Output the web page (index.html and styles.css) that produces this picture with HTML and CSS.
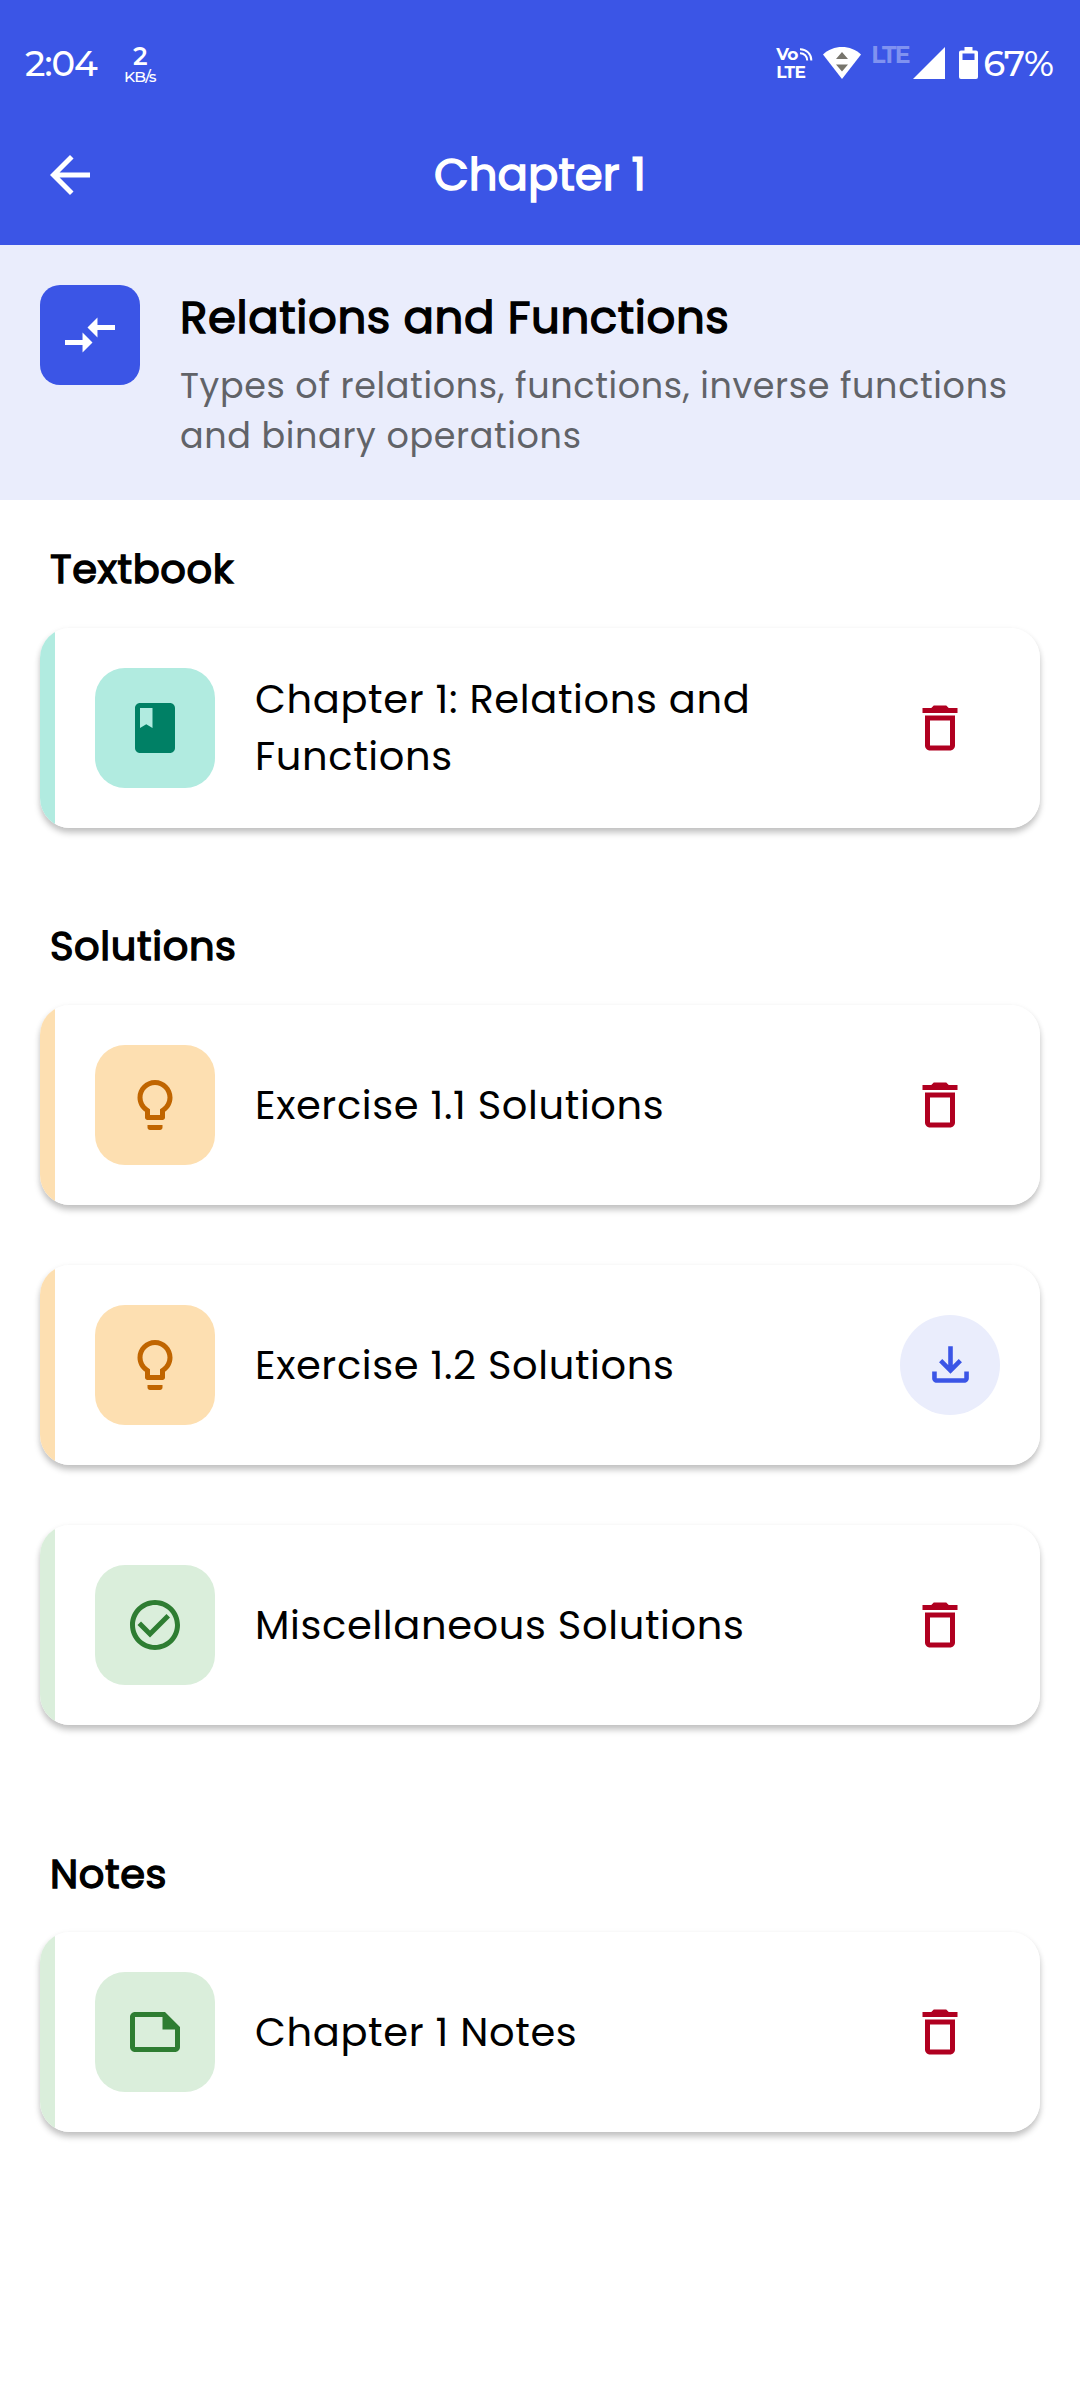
FILE: index.html
```html
<!DOCTYPE html>
<html lang="en">
<head>
<meta charset="utf-8">
<title>Chapter 1</title>
<link rel="stylesheet" href="styles.css">
</head>
<body>
<header class="top">
  <div class="status">
    <span class="clock">2:04</span>
    <span class="speed"><b>2</b><span>KB/s</span></span>
    <span class="spacer"></span>
    <span class="volte">
      <span class="vo">Vo<svg width="13" height="13" viewBox="0 0 13 13" fill="none" stroke="#fff" stroke-width="2"><path d="M0 1.2A11 11 0 0 1 11.3 12.5M0 5.2A7 7 0 0 1 7.2 12.5"/></svg></span>
      <span>LTE</span>
    </span>
    <svg class="wifi" width="38" height="32" viewBox="0 0 38 32"><path d="M0 7.5C10-2.5 28-2.5 38 7.5L19 32z" fill="#fff"/><path d="M19 5l6 7H13zM13 17.500h12l-6 7z" fill="#77756c"/></svg>
    <span class="lte">LTE</span>
    <svg class="signal" width="32" height="32" viewBox="0 0 32 32"><path d="M32 0v32H0z" fill="#fff"/></svg>
    <svg class="battery" width="19" height="32" viewBox="0 0 19 32"><path fill-rule="evenodd" fill="#fff" d="M5.500 0h8v3.500H17a2 2 0 0 1 2 2V30a2 2 0 0 1-2 2H2a2 2 0 0 1-2-2V5.500a2 2 0 0 1 2-2h3.500zM3.500 6.500V13h12V6.500z"/></svg>
    <span class="percent">67%</span>
  </div>
  <div class="bar">
    <svg width="60" height="60" viewBox="0 0 24 24" fill="#fff"><path d="M20 11H7.830l5.590-5.590L12 4l-8 8 8 8 1.410-1.410L7.830 13H20z"/></svg>
    <h1>Chapter 1</h1>
  </div>
</header>

<section class="intro">
  <div class="badge"><svg width="60" height="60" viewBox="0 0 24 24" fill="#fff"><path d="M9.010 14H2v2h7.010v3L13 15l-3.990-4zM14.990 13v-3H22V8h-7.010V5L11 9z"/></svg></div>
  <div>
    <h2>Relations and Functions</h2>
    <p>Types of relations, functions, inverse functions and binary operations</p>
  </div>
</section>

<svg width="0" height="0" class="defs">
  <symbol id="trash" viewBox="0 0 24 24"><path d="M6 19c0 1.100.9 2 2 2h8c1.100 0 2-.9 2-2V7H6zM8 9h8v10H8zM15.500 4l-1-1h-5l-1 1H5v2h14V4z"/></symbol>
  <symbol id="bulb" viewBox="0 0 24 24"><path d="M9 21c0 .55.45 1 1 1h4c.55 0 1-.45 1-1v-1H9zM12 2C8.140 2 5 5.140 5 9c0 2.380 1.190 4.470 3 5.740V17c0 .55.45 1 1 1h6c.55 0 1-.45 1-1v-2.260c1.810-1.270 3-3.360 3-5.740 0-3.860-3.140-7-7-7zm2.850 11.100l-.85.6V16h-4v-2.300l-.85-.6C7.800 12.160 7 10.630 7 9c0-2.760 2.240-5 5-5s5 2.240 5 5c0 1.630-.8 3.160-2.150 4.100z"/></symbol>
</svg>

<main>
  <section class="group textbook">
    <h3>Textbook</h3>
    <article class="card teal">
      <div class="tile"><svg width="60" height="60" viewBox="0 0 24 24"><path d="M18 2H6c-1.100 0-2 .9-2 2v16c0 1.100.9 2 2 2h12c1.100 0 2-.9 2-2V4c0-1.100-.9-2-2-2zM6 4h5v8l-2.500-1.500L6 12z"/></svg></div>
      <p>Chapter 1: Relations and Functions</p>
      <svg class="delete"><use href="#trash"/></svg>
    </article>
  </section>

  <section class="group solutions">
    <h3>Solutions</h3>
    <article class="card orange">
      <div class="tile"><svg width="60" height="60"><use href="#bulb"/></svg></div>
      <p>Exercise 1.1 Solutions</p>
      <svg class="delete"><use href="#trash"/></svg>
    </article>
    <article class="card orange">
      <div class="tile"><svg width="60" height="60"><use href="#bulb"/></svg></div>
      <p>Exercise 1.2 Solutions</p>
      <div class="download"><svg width="55" height="55" viewBox="0 0 24 24"><path d="M18 15v3H6v-3H4v3c0 1.100.9 2 2 2h12c1.100 0 2-.9 2-2v-3zM17 11l-1.410-1.410L13 12.170V4h-2v8.170L8.410 9.590 7 11l5 5z"/></svg></div>
    </article>
    <article class="card green">
      <div class="tile"><svg width="60" height="60" viewBox="0 0 24 24"><path d="M12 2C6.480 2 2 6.480 2 12s4.480 10 10 10 10-4.480 10-10S17.520 2 12 2zm0 18c-4.410 0-8-3.590-8-8s3.590-8 8-8 8 3.590 8 8-3.590 8-8 8zM16.590 7.580L10 14.170 6.410 10.590 5 12l5 5 8-8z"/></svg></div>
      <p>Miscellaneous Solutions</p>
      <svg class="delete"><use href="#trash"/></svg>
    </article>
  </section>

  <section class="group notes">
    <h3>Notes</h3>
    <article class="card green">
      <div class="tile"><svg width="60" height="60" viewBox="0 0 24 24"><path d="M16 4H4c-1.100 0-2 .9-2 2v12c0 1.100.9 2 2 2h16c1.100 0 2-.9 2-2v-8zM4 18V6h11v5h5v7z"/></svg></div>
      <p>Chapter 1 Notes</p>
      <svg class="delete"><use href="#trash"/></svg>
    </article>
  </section>
</main>
</body>
</html>
```
FILE: styles.css
```css
* { box-sizing: border-box; margin: 0; padding: 0; }
body {
  width: 1080px;
  min-height: 2400px;
  background: #fff;
  color: #000;
  font-family: Poppins, Inter, sans-serif;
  letter-spacing: 0.625px;
}
svg { display: block; flex: none; }
.defs { position: absolute; }

.top { height: 245px; background: #3b55e6; color: #fff; }
.status {
  height: 125px;
  padding: 1px 27px 0 25px;
  display: flex;
  align-items: center;
  font-family: Montserrat, Inter, sans-serif;
  letter-spacing: 0;
}
.clock, .percent { margin-top: 2px; font-size: 35.500px; line-height: 44px; font-weight: 500; letter-spacing: -1px; }
.speed {
  margin: 1px 0 0 27px;
  display: flex;
  flex-direction: column;
  align-items: center;
  font-size: 15.500px;
  line-height: 15px;
  font-weight: 500;
  letter-spacing: -0.800px;
}
.speed b { font-size: 25px; line-height: 25px; font-weight: 600; }
.spacer { flex: 1; }
.volte { width: 34px; font-size: 17px; line-height: 18px; font-weight: 700; letter-spacing: -0.600px; }
.volte > span { display: block; }
.volte .vo { display: flex; align-items: center; gap: 2px; }
.wifi { margin-left: 13px; }
.lte { width: 37px; margin: -16px 0 0 10px; font-size: 23.500px; line-height: 24px; font-weight: 700; letter-spacing: -1.700px; color: #8092f0; }
.signal { margin-left: 5px; }
.battery { margin: 0 5px 0 14px; }

.bar {
  height: 100px;
  padding: 0 40px;
  display: grid;
  grid-template-columns: 60px 1fr 60px;
  align-items: center;
}
.bar h1 { text-align: center; font-size: 45px; line-height: 68px; letter-spacing: 0; }
h1, h2, h3 { font-weight: 400; -webkit-text-stroke: 1.400px currentColor; }

.intro {
  height: 255px;
  padding: 40px;
  display: flex;
  align-items: flex-start;
  gap: 40px;
  background: #eaedfc;
}
.badge {
  flex: none;
  width: 100px;
  height: 100px;
  border-radius: 20px;
  background: #3b55e6;
  display: grid;
  place-items: center;
}
.intro h2 { font-size: 45px; line-height: 65px; }
.intro p { margin-top: 11px; font-size: 35px; line-height: 50px; color: #616368; }

main { padding: 39px 40px 0; }
.group { display: flex; flex-direction: column; gap: 60px; }
.group h3 { margin: 0 10px -31.500px; font-size: 40px; line-height: 60px; }
.solutions { margin-top: 88.500px; }
.notes { margin-top: 119px; }

.card {
  height: 200px;
  padding: 0 40px 0 55px;
  display: flex;
  align-items: center;
  border-radius: 30px;
  background: linear-gradient(90deg, var(--tint) 15px, #fff 15px);
  box-shadow: 0 5px 6px rgba(0, 0, 0, 0.22), 0 1px 6px rgba(0, 0, 0, 0.05);
}
.teal { --tint: #b1ebe0; --ink: #008065; }
.orange { --tint: #fddfb1; --ink: #c06500; }
.green { --tint: #daeedb; --ink: #2e7d32; }
.tile {
  flex: none;
  width: 120px;
  height: 120px;
  border-radius: 30px;
  background: var(--tint);
  fill: var(--ink);
  display: grid;
  place-items: center;
}
.card p { flex: 1; margin: 0 40px; font-size: 40px; line-height: 57px; }
.solutions .card p { padding-top: 1px; }
.delete { width: 60px; height: 60px; margin-right: 30px; fill: #b00020; }
.download {
  flex: none;
  width: 100px;
  height: 100px;
  border-radius: 50%;
  background: #eaedfc;
  fill: #3b55e6;
  display: grid;
  place-items: center;
}
```
